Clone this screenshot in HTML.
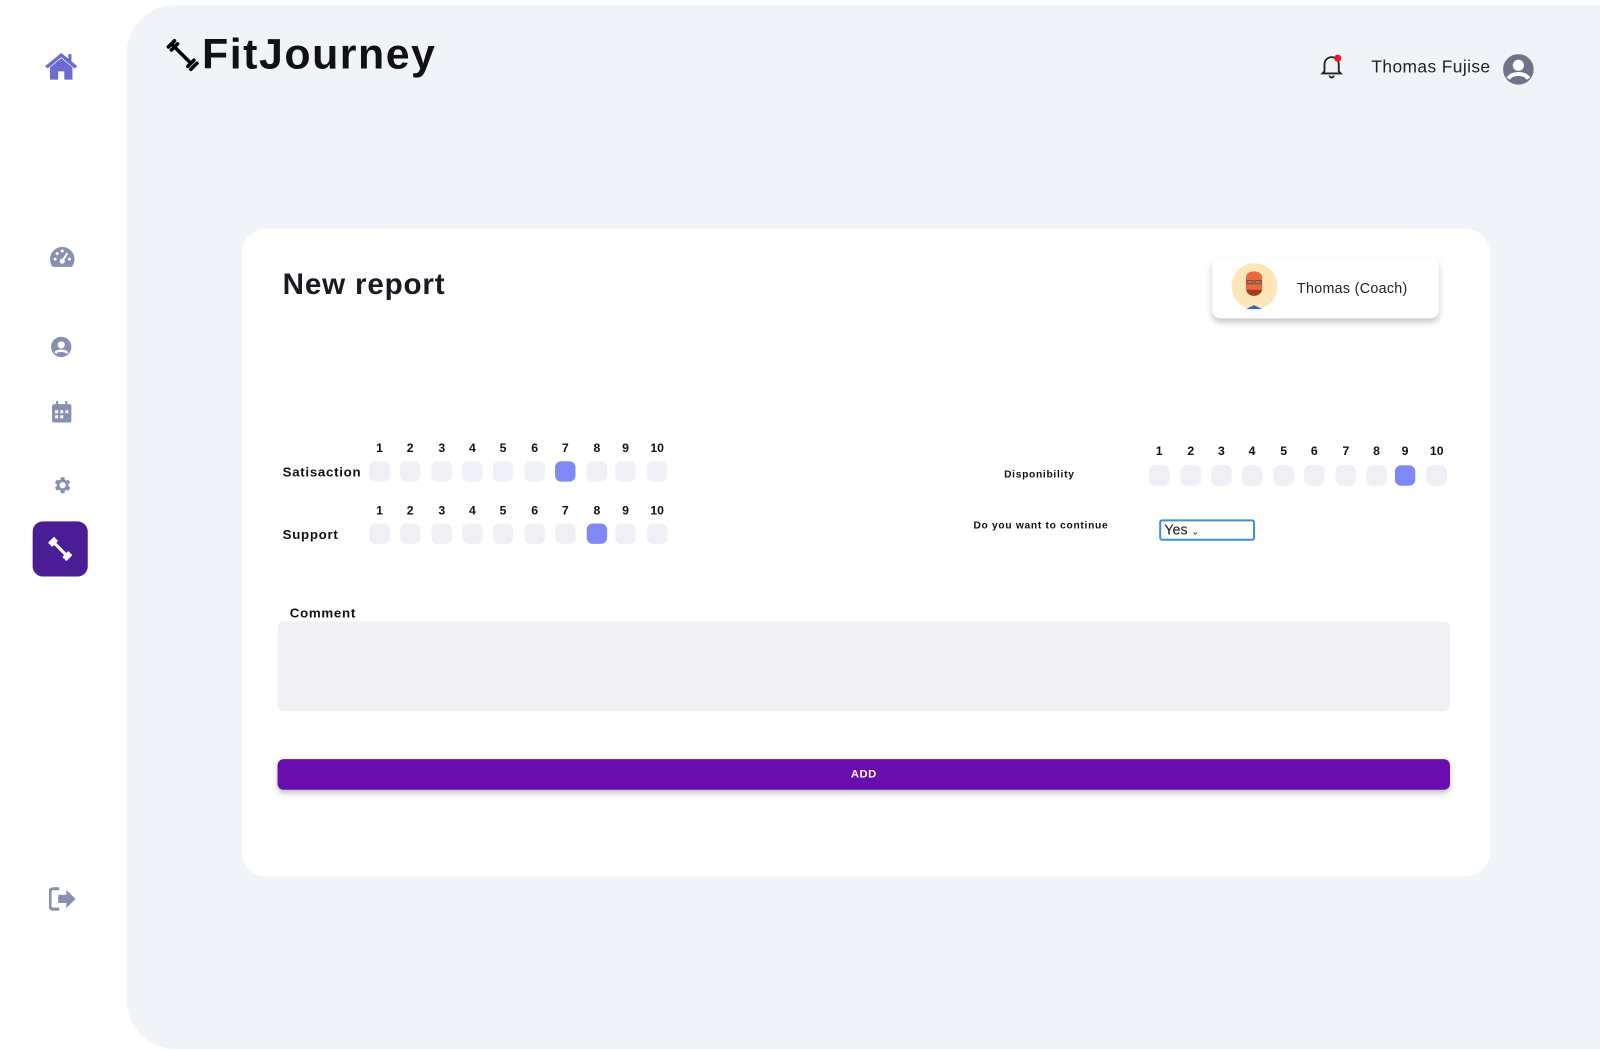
<!DOCTYPE html>
<html><head><meta charset="utf-8"><style>
*{margin:0;padding:0;box-sizing:border-box}
body{width:1600px;height:1050px;background:#fff;font-family:"Liberation Sans",sans-serif;overflow:hidden;color:#111}
#w{position:absolute;left:0;top:0;width:1568px;height:1029px;transform:scale(1.0204);transform-origin:0 0}
.abs{position:absolute}
.main{left:124px;top:5px;width:1500px;height:1023px;background:#f0f3f8;border-radius:48px}
.card{left:237px;top:224px;width:1223px;height:635px;background:#fff;border-radius:24px}
.b{position:absolute;width:20px;height:20px;border-radius:6px;background:#efeff6}
.b.on{background:#8088f5}
.n{position:absolute;font-size:12px;font-weight:bold;width:30px;text-align:center}
.lbl{position:absolute;font-weight:bold;font-size:13px;letter-spacing:.7px}
</style></head><body><div id="w">
<div class="abs main"></div>
<svg class="abs" style="left:43px;top:50px" width="34" height="30" viewBox="0 0 34 30"><path d="M17 2 L1 15 L4 17 L17 6 L30 17 L33 15 L27 10 V3 H24 V7.5Z" fill="#6b6bd0"/><path d="M6 16 L17 7 L28 16 V28 H20 V20 H14 V28 H6Z" fill="#6b6bd0"/></svg>
<svg class="abs" style="left:48px;top:241px" width="26" height="22" viewBox="0 0 26 22"><path d="M13 1A12 12 0 0 0 1 13c0 3 1 5.5 2.5 7.5h19C24 18.5 25 16 25 13A12 12 0 0 0 13 1z" fill="#8790ae"/><circle cx="13" cy="15" r="2.5" fill="#fff"/><path d="M13 15 L18 7" stroke="#fff" stroke-width="2"/><circle cx="6" cy="13" r="1.5" fill="#fff"/><circle cx="8" cy="7.5" r="1.5" fill="#fff"/><circle cx="13" cy="5" r="1.5" fill="#fff"/><circle cx="20" cy="13" r="1.5" fill="#fff"/></svg>
<svg class="abs" style="left:50px;top:330px" width="20" height="20" viewBox="0 0 20 20"><circle cx="10" cy="10" r="10" fill="#8790ae"/><circle cx="10" cy="8" r="3.5" fill="#fff"/><path d="M4 16c2-3 10-3 12 0" stroke="#fff" stroke-width="2.5" fill="none"/></svg>
<svg class="abs" style="left:51px;top:393px" width="19" height="21" viewBox="0 0 19 21"><rect x="0" y="3" width="19" height="18" rx="2" fill="#8790ae"/><rect x="4" y="0" width="2" height="4" fill="#8790ae"/><rect x="13" y="0" width="2" height="4" fill="#8790ae"/><g fill="#fff"><rect x="3" y="9" width="3" height="3"/><rect x="8" y="9" width="3" height="3"/><rect x="13" y="9" width="3" height="3"/><rect x="3" y="14" width="3" height="3"/><rect x="8" y="14" width="3" height="3"/></g></svg>
<svg class="abs" style="left:50px;top:465px" width="21" height="21" viewBox="0 0 24 24"><path fill="#8790ae" d="M19.4 13a7.5 7.5 0 0 0 0-2l2.1-1.6-2-3.5-2.5 1a7 7 0 0 0-1.7-1L15 3h-4l-.4 2.8a7 7 0 0 0-1.7 1l-2.5-1-2 3.5L6.5 11a7.5 7.5 0 0 0 0 2l-2.1 1.6 2 3.5 2.5-1a7 7 0 0 0 1.7 1L11 21h4l.4-2.8a7 7 0 0 0 1.7-1l2.5 1 2-3.5zM13 15.5A3.5 3.5 0 1 1 13 8.5a3.5 3.5 0 0 1 0 7z"/></svg>
<div class="abs" style="left:32px;top:511px;width:54px;height:54px;border-radius:10px;background:#4a1d96"></div>
<svg class="abs" style="left:46px;top:525px" width="26" height="26" viewBox="0 0 26 26"><g stroke="#fff" stroke-linecap="round"><path d="M6 6 L20 20" stroke-width="3"/><path d="M3 7 L7 3 M5 9 L9 5 M17 21 L21 17 M19 23 L23 19" stroke-width="3"/></g></svg>
<svg class="abs" style="left:48px;top:869px" width="27" height="24" viewBox="0 0 27 24"><path d="M10 2H4a3 3 0 0 0-3 3v14a3 3 0 0 0 3 3h6" stroke="#8790ae" stroke-width="3" fill="none"/><path d="M9 8h8V3l9 9-9 9v-5H9z" fill="#8790ae"/></svg>
<svg class="abs" style="left:163px;top:38px" width="32" height="32" viewBox="0 0 32 32"><g stroke="#000" stroke-linecap="round"><path d="M6 6 L24 24" stroke-width="3.5"/><path d="M2 8 L8 2 M5 11 L11 5 M21 27 L27 21 M24 30 L30 24" stroke-width="3.5"/></g></svg>
<div class="abs" style="left:198px;top:29px;font-size:42px;font-weight:bold;letter-spacing:1.5px">FitJourney</div>
<svg class="abs" style="left:1293px;top:52px" width="24" height="26" viewBox="0 0 24 26"><path d="M5 18V11a7 7 0 0 1 14 0v7l2 2H3z" fill="none" stroke="#222" stroke-width="1.8"/><path d="M10 22a2 2 0 0 0 4 0" stroke="#222" stroke-width="1.8" fill="none"/><circle cx="18" cy="5" r="3.5" fill="#e8192c"/></svg>
<div class="abs" style="left:1344px;top:56px;font-size:17px;color:#222;letter-spacing:.4px">Thomas Fujise</div>
<svg class="abs" style="left:1473px;top:53px" width="30" height="30" viewBox="0 0 30 30"><circle cx="15" cy="15" r="15" fill="#6e7389"/><circle cx="15" cy="11" r="5.5" fill="#fff"/><path d="M5 24c4-6 16-6 20 0" stroke="#fff" stroke-width="4" fill="none"/></svg>
<div class="abs card"></div>
<div class="abs" style="left:277px;top:263px;font-size:29px;font-weight:bold;color:#1a1a22;letter-spacing:.8px">New report</div>
<div class="abs" style="left:1188px;top:252px;width:222px;height:60px;background:#fff;border-radius:8px;box-shadow:0 4px 6px rgba(0,0,0,.22)"></div>
<svg class="abs" style="left:1207px;top:258px" width="45" height="45" viewBox="0 0 45 45"><circle cx="22.5" cy="22.5" r="22.5" fill="#fde6b8"/><path d="M14 14c0-8 16-8 16 0v10c0 6-16 6-16 0z" fill="#e86a3c"/><path d="M14 26c2 8 14 8 16 0z" fill="#a8391c"/><rect x="15" y="17" width="6" height="3" fill="none" stroke="#555"/><rect x="23" y="17" width="6" height="3" fill="none" stroke="#555"/><path d="M14 45l8-4 8 4z" fill="#2a6cc0"/></svg>
<div class="abs" style="left:1271px;top:274px;font-size:14px;color:#222;letter-spacing:.3px">Thomas (Coach)</div>
<div class="lbl" style="left:277px;top:455px">Satisaction</div>
<div class="lbl" style="left:277px;top:516px">Support</div>
<div class="lbl" style="left:984px;top:460px;font-size:10px">Disponibility</div>
<div class="lbl" style="left:954px;top:510px;font-size:10px">Do you want to continue</div>
<div id="g"></div>
<div class="abs" style="left:1136px;top:509px;width:94px;height:21px;border:2px solid #3b8fe0;border-radius:3px;font-size:14px;padding-left:3px;line-height:17px;color:#111">Yes <span style="font-size:9px">&#8964;</span></div>
<div class="lbl" style="left:284px;top:593px">Comment</div>
<div class="abs" style="left:272px;top:609px;width:1149px;height:88px;background:#f0f0f5;border-radius:6px"></div>
<div class="abs" style="left:272px;top:744px;width:1149px;height:30px;background:#6a0dad;border-radius:6px;box-shadow:0 3px 5px rgba(0,0,0,.25);color:#fff;font-size:11px;font-weight:bold;text-align:center;line-height:30px;letter-spacing:.5px">ADD</div>
</div>
<script>
var g=document.getElementById('g'),h='';
function row(xs,ny,by,sel){xs.forEach(function(x,i){h+='<div class="n" style="left:'+(x-15)+'px;top:'+ny+'px">'+(i+1)+'</div><div class="b'+(i+1==sel?' on':'')+'" style="left:'+(x-10)+'px;top:'+by+'px"></div>';});}
var L=[372,402,433,463,493,524,554,585,613,644],R=[1136,1167,1197,1227,1258,1288,1319,1349,1377,1408];
row(L,432,452,7);row(L,493,513,8);row(R,435,456,9);
g.innerHTML=h;
</script>
</body></html>
